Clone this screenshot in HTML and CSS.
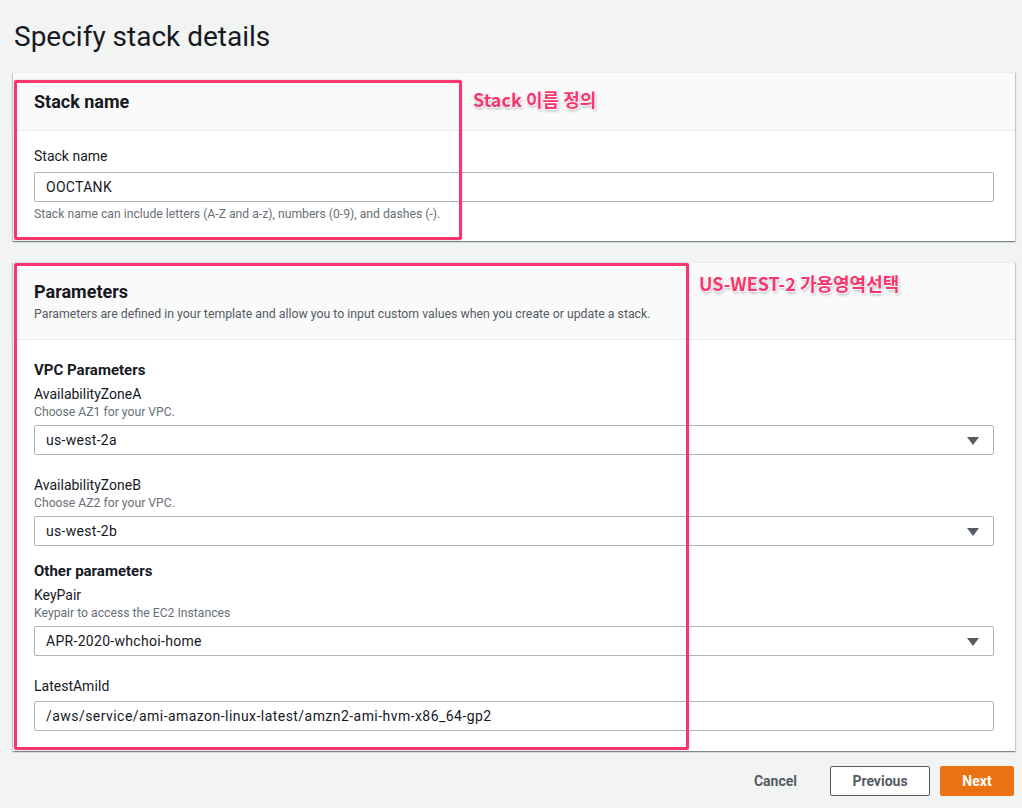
FILE: index.html
```html
<!DOCTYPE html>
<html lang="en">
<head>
<meta charset="utf-8">
<title>Specify stack details</title>
<link rel="stylesheet" href="styles.css">
</head>
<body>
<div class="page">
  <h1 class="title">Specify stack details</h1>

  <section class="panel">
    <header class="panel-header">
      <h2 class="panel-title">Stack name</h2>
    </header>
    <div class="panel-body body-stack">
      <div class="field">
        <label class="label">Stack name</label>
        <div class="input">OOCTANK</div>
        <div class="hint after">Stack name can include letters (A-Z and a-z), numbers (0-9), and dashes (-).</div>
      </div>
    </div>
  </section>

  <section class="panel">
    <header class="panel-header">
      <h2 class="panel-title">Parameters</h2>
      <p class="panel-desc">Parameters are defined in your template and allow you to input custom values when you create or update a stack.</p>
    </header>
    <div class="panel-body body-params">
      <h3 class="group">VPC Parameters</h3>
      <div class="field">
        <label class="label">AvailabilityZoneA</label>
        <div class="hint">Choose AZ1 for your VPC.</div>
        <div class="input select">us-west-2a<span class="caret"></span></div>
      </div>
      <div class="field">
        <label class="label">AvailabilityZoneB</label>
        <div class="hint">Choose AZ2 for your VPC.</div>
        <div class="input select">us-west-2b<span class="caret"></span></div>
      </div>
      <h3 class="group">Other parameters</h3>
      <div class="field">
        <label class="label">KeyPair</label>
        <div class="hint">Keypair to access the EC2 Instances</div>
        <div class="input select">APR-2020-whchoi-home<span class="caret"></span></div>
      </div>
      <div class="field">
        <label class="label">LatestAmiId</label>
        <div class="input long">/aws/service/ami-amazon-linux-latest/amzn2-ami-hvm-x86_64-gp2</div>
      </div>
    </div>
  </section>

  <div class="actions">
    <button class="btn btn-link">Cancel</button>
    <button class="btn btn-normal">Previous</button>
    <button class="btn btn-primary">Next</button>
  </div>

  <div class="note-box box1"></div>
  <div class="note-text text1">Stack 이름 정의</div>
  <div class="note-box box2"></div>
  <div class="note-text text2">US-WEST-2 가용영역선택</div>
</div>
</body>
</html>
```
FILE: styles.css
```css
* { box-sizing: border-box; }
html, body { margin: 0; padding: 0; }
body {
  background: #f2f3f3;
  font-family: Roboto, "Noto Sans", "Liberation Sans", sans-serif;
  color: #16191f;
  width: 1022px;
  height: 808px;
  overflow: hidden;
}
.page {
  position: relative;
  padding: 0 7px 0 13px;
}
.title {
  margin: 0;
  padding: 18px 0 0 1px;
  height: 72px;
  font-size: 28px;
  line-height: 38px;
  font-weight: 400;
}
.panel {
  background: #fff;
  border-top: 1px solid #eaeded;
  box-shadow: 0 1px 1px 0 rgba(0, 28, 36, 0.3), 1px 1px 1px 0 rgba(0, 28, 36, 0.15), -1px 1px 1px 0 rgba(0, 28, 36, 0.15);
  margin-bottom: 21px;
}
.panel-header {
  background: #fafafa;
  border-bottom: 1px solid #eaeded;
  padding: 18px 20px 17px 21px;
}
.panel-title {
  margin: 0;
  font-size: 18px;
  line-height: 22px;
  font-weight: 700;
}
.panel-desc {
  margin: 3px 0 0;
  font-size: 12.3px;
  line-height: 16px;
  color: #545b64;
}
.panel-body { padding: 0 21px 20px 21px; }
.body-stack { padding: 15px 21px 19px; }
.body-params { padding-top: 20px; }
.group {
  margin: 0 0 4px;
  font-size: 15px;
  line-height: 20px;
  font-weight: 700;
}
.field { display: flex; flex-direction: column; margin-bottom: 20px; }
.field:last-child { margin-bottom: 0; }
.field + .group { margin-top: -5px; }
.label {
  font-size: 14px;
  line-height: 20px;
}
.hint {
  font-size: 12.2px;
  line-height: 16px;
  color: #687078;
  margin-bottom: 5px;
}
.hint.after { margin: 4px 0 0; }
.label + .input { margin-top: 5px; }
.body-stack .label + .input { margin-top: 6px; }
.input {
  position: relative;
  height: 30px;
  border: 1px solid #aab7b8;
  border-radius: 2px;
  padding: 0 11px;
  font-size: 14px;
  line-height: 28px;
  letter-spacing: 0.3px;
  background: #fff;
}
.input.long { letter-spacing: 0.45px; }
.caret {
  position: absolute;
  right: 14px;
  top: 11px;
  width: 0;
  height: 0;
  border-left: 6px solid transparent;
  border-right: 6px solid transparent;
  border-top: 8px solid #545b64;
}
.actions {
  display: flex;
  justify-content: flex-end;
  align-items: center;
  gap: 10px;
  margin-top: -6px;
  padding-right: 1px;
}
.btn {
  font-family: inherit;
  font-size: 14px;
  font-weight: 700;
  height: 30px;
  border-radius: 2px;
  padding: 0 20px;
  cursor: pointer;
}
.btn-link {
  background: none;
  border: 1px solid transparent;
  color: #545b64;
  margin-right: 2px;
}
.btn-normal {
  background: #fff;
  border: 1px solid #545b64;
  color: #545b64;
  width: 100px;
}
.btn-primary {
  background: #ec7211;
  border: 1px solid #ec7211;
  color: #fff;
  width: 74px;
}
.note-box {
  position: absolute;
  border: 3px solid #f8356e;
  border-radius: 2px;
  box-shadow: 0 0 2px rgba(0,0,0,0.25);
}
.box1 { left: 14px; top: 80px; width: 448px; height: 160px; }
.box2 { left: 14px; top: 263px; width: 675px; height: 487px; }
.note-text {
  position: absolute;
  font-family: "Noto Sans CJK KR", "Noto Sans", sans-serif;
  font-weight: 700;
  font-size: 18px;
  line-height: 24px;
  color: #f8356e;
  letter-spacing: 0;
  text-shadow: 0 0 1px #fff, 0 0 2px #fff, 1px 1px 1px #fff, 1px 2px 3px rgba(0,0,0,0.35);
}
.text1 { left: 473px; top: 87px; }
.text2 { left: 699px; top: 271px; }
```
